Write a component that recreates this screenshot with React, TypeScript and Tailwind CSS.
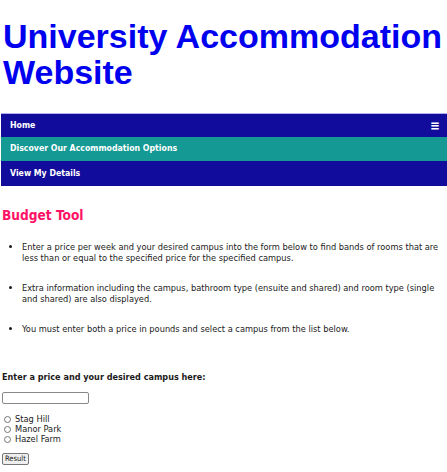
import { useState } from "react";

const campuses = ["Stag Hill", "Manor Park", "Hazel Farm"];

const points = [
  "Enter a price per week and your desired campus into the form below to find bands of rooms that are less than or equal to the specified price for the specified campus.",
  "Extra information including the campus, bathroom type (ensuite and shared) and room type (single and shared) are also displayed.",
  "You must enter both a price in pounds and select a campus from the list below.",
];

const App = () => {
  const [campus, setCampus] = useState("");

  return (
    <div className="min-h-screen bg-white font-['DejaVu_Sans_Condensed','DejaVu_Sans',sans-serif] text-[#1a1a1a]">
      <h1 className="px-[3px] pt-[18px] font-['Liberation_Sans',Arial,sans-serif] text-[34px] font-bold leading-[36px] text-[#0000ee]">
        University Accommodation Website
      </h1>

      <nav className="mt-[23px] ml-px border-t border-[#b4b0f0] text-[8.7px] font-bold text-white">
        <div className="flex h-[23px] items-center justify-between bg-[#110c9b] pl-[9px] pr-[7px]">
          <span>Home</span>
          <span className="text-[13px] leading-none">&#8801;</span>
        </div>
        <div className="flex h-[24px] items-center bg-[#159994] pl-[9px]">
          Discover Our Accommodation Options
        </div>
        <div className="flex h-[25px] items-center bg-[#110c9b] pl-[9px]">View My Details</div>
      </nav>

      <h2 className="mt-[20px] px-[2px] text-[13.6px] font-bold leading-[18px] text-[#ff1166]">Budget Tool</h2>

      <ul className="mt-[17px] list-disc pl-[22px] pr-[2px] text-[9.2px] leading-[11px]">
        {points.map((p) => (
          <li key={p} className="mb-[19px]">
            {p}
          </li>
        ))}
      </ul>

      <form className="mt-[37px] px-[2px] text-[9.2px]" onSubmit={(e) => e.preventDefault()}>
        <p className="text-[9px] font-bold leading-[12px]">Enter a price and your desired campus here:</p>
        <input type="text" className="mt-[9px] block h-[12px] w-[87px] rounded-[2px] border border-[#888]" />
        <div className="mt-[10px] flex flex-col">
          {campuses.map((c) => (
            <label key={c} className="flex h-[10px] items-center gap-[4px] pl-[2px]">
              <input
                type="radio"
                name="campus"
                checked={campus === c}
                onChange={() => setCampus(c)}
                className="m-0 h-[7px] w-[7px]"
              />
              {c}
            </label>
          ))}
        </div>
        <button
          type="submit"
          className="mt-[9px] h-[12px] rounded-[2px] border border-[#777] bg-[#efefef] px-[2px] text-[7.5px] leading-[10px]"
        >
          Result
        </button>
      </form>
    </div>
  );
};

export default App;
